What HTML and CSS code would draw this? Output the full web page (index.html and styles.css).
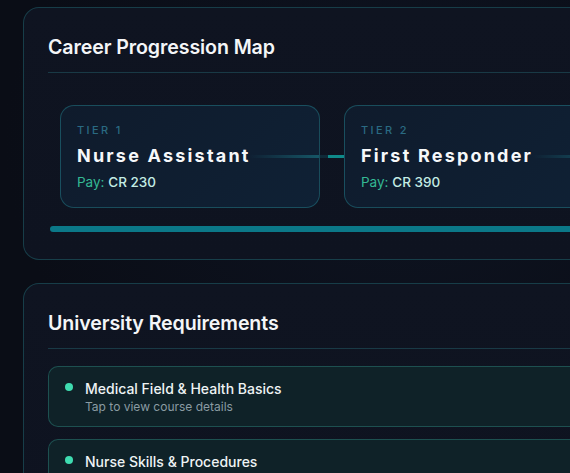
FILE: index.html
```html
<!DOCTYPE html>
<html>
<head>
<meta charset="utf-8">
<link rel="stylesheet" href="styles.css">
</head>
<body>
<div class="page">
  <section class="panel panel-map">
    <h2 class="panel-title">Career Progression Map</h2>
    <div class="track">
      <div class="tier">
        <div class="tier-label">TIER 1</div>
        <div class="tier-name">Nurse Assistant</div>
        <div class="tier-pay">Pay: <span class="pay-val">CR 230</span></div>
      </div>
      <div class="connector"></div>
      <div class="tier">
        <div class="tier-label">TIER 2</div>
        <div class="tier-name">First Responder</div>
        <div class="tier-pay">Pay: <span class="pay-val">CR 390</span></div>
      </div>
    </div>
    <div class="progress"></div>
  </section>

  <section class="panel">
    <h2 class="panel-title">University Requirements</h2>
    <div class="reqs">
      <div class="req">
        <span class="dot"></span>
        <div class="req-text">
          <div class="req-title">Medical Field &amp; Health Basics</div>
          <div class="req-sub">Tap to view course details</div>
        </div>
      </div>
      <div class="req">
        <span class="dot"></span>
        <div class="req-text">
          <div class="req-title">Nurse Skills &amp; Procedures</div>
          <div class="req-sub">Tap to view course details</div>
        </div>
      </div>
    </div>
  </section>
</div>
</body>
</html>
```
FILE: styles.css
```css
html, body {
  margin: 0;
  padding: 0;
  overflow: hidden;
  height: 473px;
}
body {
  background: radial-gradient(ellipse at 70% 30%, #0e1422 0%, #0a0d16 70%);
  font-family: Inter, "Noto Sans", sans-serif;
  color: #f2f5f8;
}
.page {
  width: 1100px;
  padding: 7px 0 0 23px;
  display: flex;
  flex-direction: column;
  gap: 23px;
}
.panel {
  border: 1px solid rgba(40, 140, 150, 0.35);
  border-radius: 16px;
  background: linear-gradient(180deg, #0f1421 0%, #0e1320 100%);
  padding: 26px 24px 28px 24px;
}
.panel-map {
  padding-bottom: 27px;
}
.panel-title {
  margin: 0;
  font-size: 19.6px;
  line-height: 26px;
  font-weight: 600;
  letter-spacing: -0.1px;
  color: #f4f6f8;
  padding-bottom: 12px;
  border-bottom: 1px solid rgba(45, 130, 140, 0.35);
}
.track {
  display: flex;
  align-items: center;
  padding: 32px 12px 0 12px;
}
.tier {
  position: relative;
  width: 260px;
  flex: none;
  box-sizing: border-box;
  border: 1px solid rgba(40, 150, 160, 0.4);
  border-radius: 14px;
  background: linear-gradient(135deg, #0f1b2c 0%, #0f2135 100%);
  padding: 17px 16px 16px 16px;
}
.tier::after {
  content: "";
  position: absolute;
  left: 188px;
  right: 0;
  top: 49px;
  height: 3px;
  background: linear-gradient(90deg, rgba(20, 90, 110, 0) 0%, rgba(25, 110, 125, 0.7) 100%);
}
.tier-label {
  font-size: 11px;
  line-height: 14px;
  letter-spacing: 2.4px;
  color: #2a6a82;
  font-weight: 500;
}
.tier-name {
  position: relative;
  z-index: 1;
  margin-top: 7px;
  font-size: 18px;
  line-height: 24px;
  font-weight: 700;
  letter-spacing: 2.2px;
  color: #f6f8fa;
}
.tier-pay {
  margin-top: 5px;
  font-size: 13.5px;
  line-height: 18px;
  color: #34b894;
}
.pay-val {
  color: #c3ece4;
  font-weight: 500;
}
.connector {
  flex: none;
  width: 24px;
  height: 3px;
  background: linear-gradient(90deg, #0f2a38 0 8px, #0f8a8a 8px 100%);
}
.progress {
  margin: 18px 0 0 2px;
  height: 6px;
  border-radius: 3px 0 0 3px;
  background: #0b7888;
}
.reqs {
  display: flex;
  flex-direction: column;
  gap: 12px;
  padding-top: 17px;
}
.req {
  display: flex;
  align-items: flex-start;
  gap: 12px;
  border: 1px solid rgba(50, 150, 140, 0.4);
  border-radius: 10px;
  background: #0f2228;
  padding: 12px 16px 11px 16px;
}
.dot {
  flex: none;
  width: 8px;
  height: 8px;
  border-radius: 50%;
  background: #3fdcb0;
  margin-top: 4px;
}
.req-title {
  font-size: 14px;
  line-height: 20px;
  font-weight: 500;
  color: #eef3f4;
}
.req-sub {
  font-size: 12px;
  line-height: 16px;
  color: #8a9ba3;
}
```
